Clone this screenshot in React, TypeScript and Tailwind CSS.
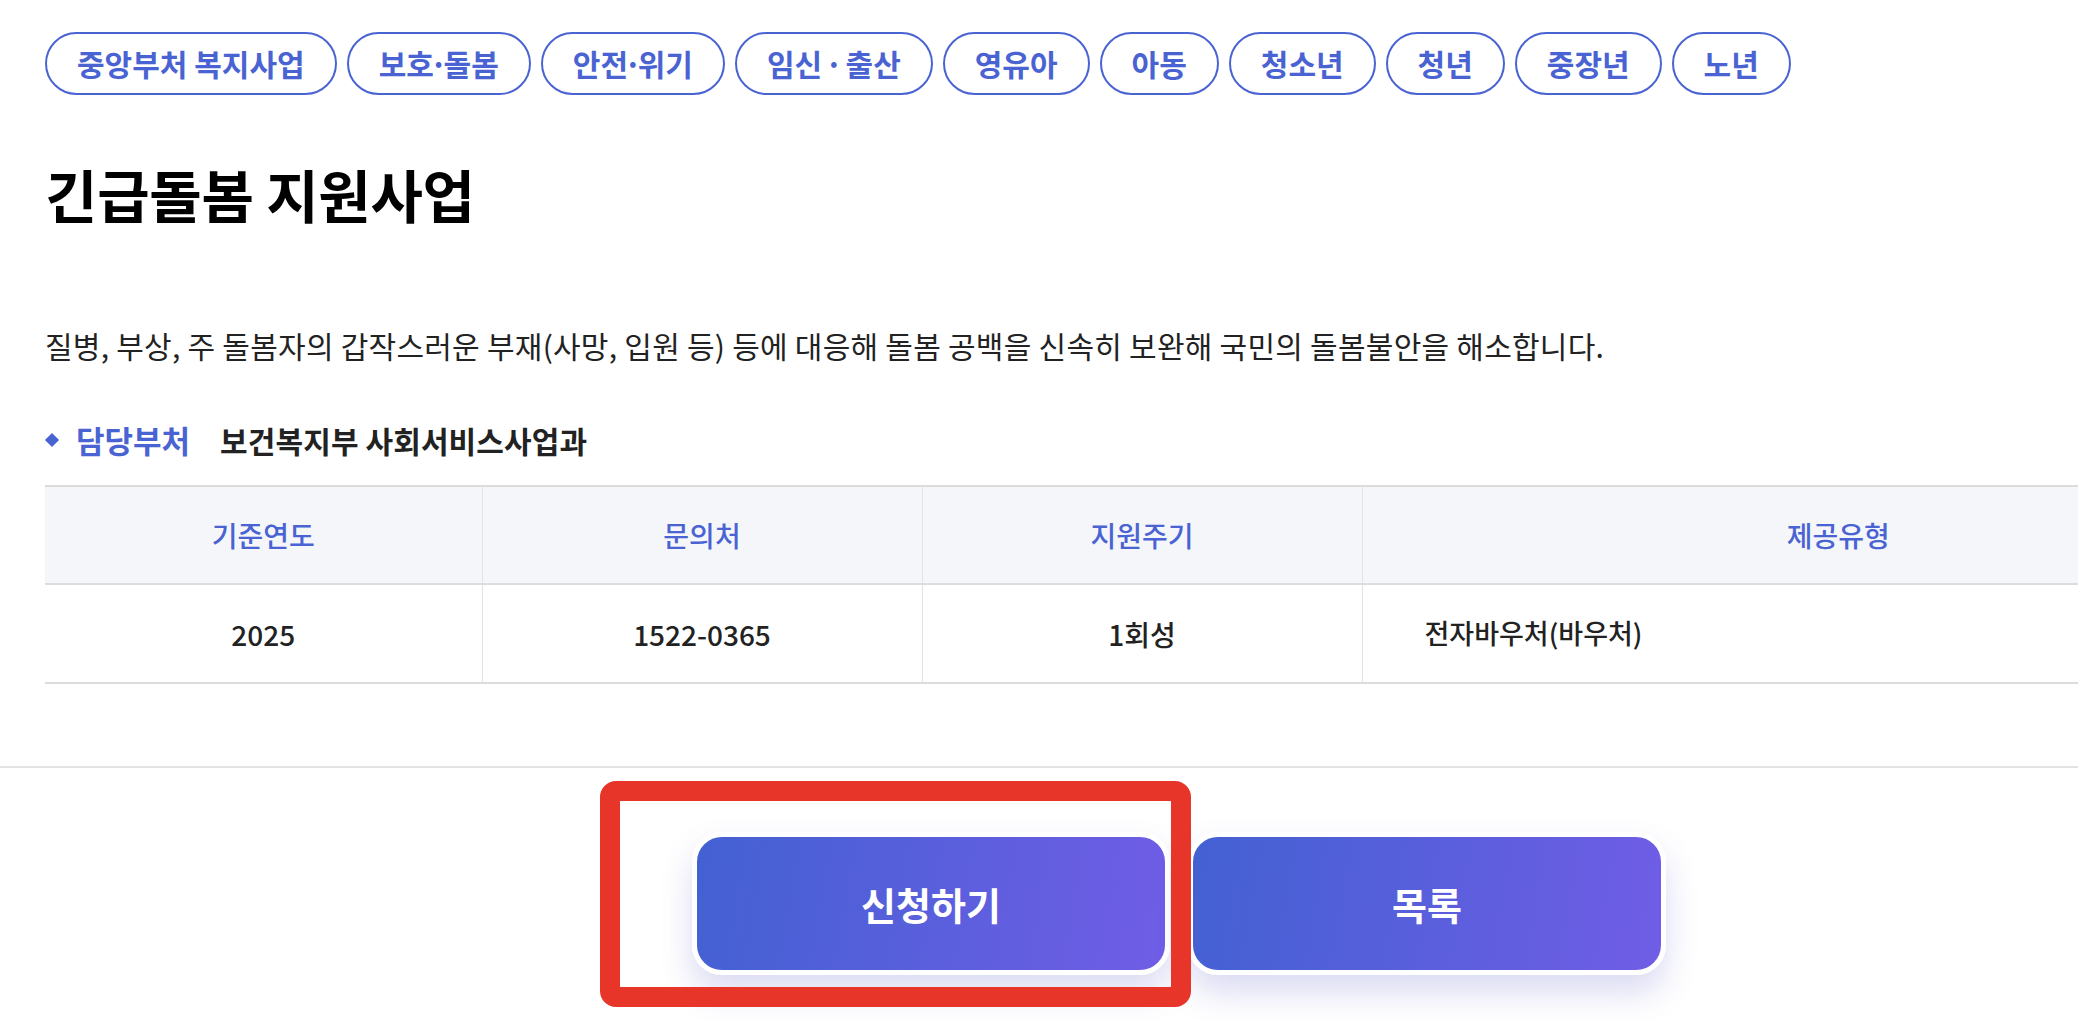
const CATEGORIES = ['중앙부처 복지사업', '보호·돌봄', '안전·위기', '임신 · 출산', '영유아', '아동', '청소년', '청년', '중장년', '노년'];

const FONT = "font-['Noto_Sans_CJK_KR','Noto_Sans',sans-serif]";

// the middle dot renders wider in Noto than in the original font
function ChipLabel({ text }: { text: string }) {
  const parts = text.split('·');
  return (
    <>
      {parts.map((p, i) => (
        <span key={i} className="whitespace-pre">
          {i > 0 && <span className="-mx-[4px]">·</span>}
          {p}
        </span>
      ))}
    </>
  );
}

export default function App() {
  return (
    <div className={`relative h-[1022px] w-full overflow-hidden bg-white ${FONT}`}>
      <div className="w-[2358px] px-[45px] pt-[32px]">
        {/* category chips */}
        <div className="flex gap-[10px]">
          {CATEGORIES.map((c) => (
            <span
              key={c}
              className="flex h-[63px] items-center rounded-full border-2 border-[#4a63d3] px-[30px] text-[30px] font-semibold text-[#4a63d3]"
            >
              <ChipLabel text={c} />
            </span>
          ))}
        </div>

        <h1 className="mt-[67px] h-[62px] text-[57px] font-bold leading-[62px] tracking-[-0.3px] text-black">
          긴급돌봄 지원사업
        </h1>

        <p className="mt-[101px] text-[30px] leading-[40px] tracking-[0.25px] text-[#222]">
          질병, 부상, 주 돌봄자의 갑작스러운 부재(사망, 입원 등) 등에 대응해 돌봄 공백을 신속히 보완해 국민의 돌봄불안을 해소합니다.
        </p>

        <div className="mt-[55px] flex items-center leading-[40px]">
          <span className="ml-[2px] mr-[19px] h-[10px] w-[10px] rotate-45 bg-[#4a63d3]" />
          <span className="text-[31px] font-semibold text-[#4a63d3]">담당부처</span>
          <span className="ml-[30px] text-[30px] font-semibold tracking-[0.1px] text-[#222]">보건복지부 사회서비스사업과</span>
        </div>

        <table className="mt-[25px] w-[2269px] table-fixed border-collapse">
          <colgroup>
            <col className="w-[437px]" />
            <col className="w-[440px]" />
            <col className="w-[440px]" />
            <col />
          </colgroup>
          <thead>
            <tr className="h-[98px] border-y-2 border-[#dcdcdc] bg-[#f5f6fa]">
              {['기준연도', '문의처', '지원주기', '제공유형'].map((h, i) => (
                <th
                  key={h}
                  className={`text-center text-[28px] font-medium text-[#4a63d3] ${i > 0 ? 'border-l border-[#e2e2e2]' : ''}`}
                >
                  {h}
                </th>
              ))}
            </tr>
          </thead>
          <tbody>
            <tr className="h-[99px] border-b-2 border-[#dcdcdc] text-[28px] font-medium text-[#222]">
              <td className="text-center">2025</td>
              <td className="border-l border-[#e2e2e2] text-center">1522-0365</td>
              <td className="border-l border-[#e2e2e2] text-center">1회성</td>
              <td className="border-l border-[#e2e2e2] pl-[62px] text-[27px]">전자바우처(바우처)</td>
            </tr>
          </tbody>
        </table>
      </div>

      <div className="mt-[82px] h-[2px] w-full bg-[#e3e3e3]" />

      <div className="mt-[64px] flex w-[2358px] justify-center gap-[18px]">
        <button
          type="button"
          className="flex h-[143px] w-[478px] items-center justify-center rounded-[30px] border-[5px] border-white bg-[linear-gradient(100deg,#4361d2,#705de6)] text-[38px] font-bold text-white shadow-[0_18px_32px_rgba(90,90,200,0.22)]"
        >
          신청하기
        </button>
        <button
          type="button"
          className="flex h-[143px] w-[478px] items-center justify-center rounded-[30px] border-[5px] border-white bg-[linear-gradient(100deg,#4361d2,#705de6)] text-[38px] font-bold text-white shadow-[0_18px_32px_rgba(90,90,200,0.22)]"
        >
          목록
        </button>
      </div>

      {/* annotation highlight */}
      <div className="pointer-events-none absolute left-[600px] top-[781px] h-[226px] w-[591px] rounded-[16px] border-[20px] border-[#e8352a]" />
    </div>
  );
}
